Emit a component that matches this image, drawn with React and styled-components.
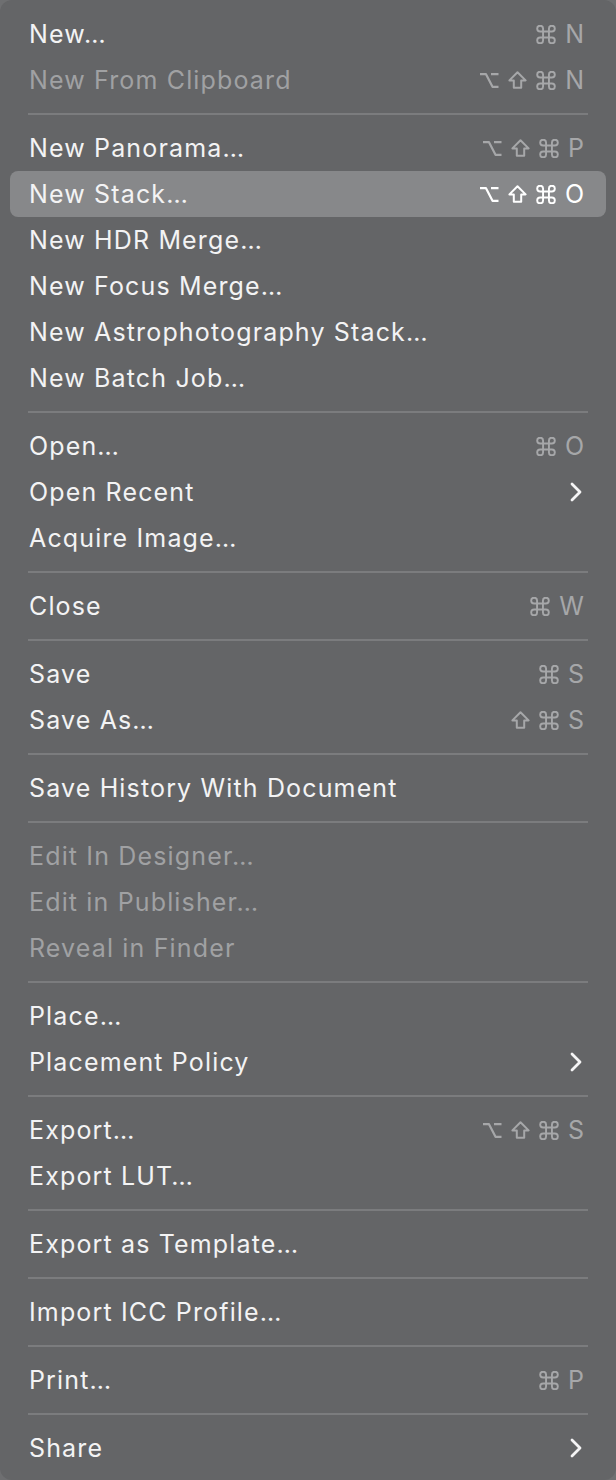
import React from "react";
import styled, { createGlobalStyle } from "styled-components";

const Global = createGlobalStyle`
  html, body { margin: 0; padding: 0; background: #6e6f71; }
  body { font-family: Inter, "Open Sans", "Liberation Sans", sans-serif; -webkit-font-smoothing: antialiased; }
`;

const Menu = styled.div`
  width: 616px;
  height: 1480px;
  box-sizing: border-box;
  background: #646567;
  border-radius: 12px;
  padding: 11px 10px 9px;
  display: flex;
  flex-direction: column;
`;

const Row = styled.div`
  height: 46px;
  display: flex;
  align-items: center;
  justify-content: space-between;
  padding: 0 22px 0 19px;
  border-radius: 8px;
  background: ${(p) => (p.$active ? "#87888a" : "transparent")};
  color: ${(p) => (p.$disabled ? "#a0a1a3" : "#f3f3f4")};
  font-size: 25px;
  letter-spacing: 1.15px;
`;

const Label = styled.span`
  white-space: nowrap;
`;

const Shortcut = styled.span`
  display: flex;
  align-items: center;
  gap: 9px;
  color: ${(p) => (p.$active ? "#ffffff" : "#a6a7a9")};
  letter-spacing: 0;
  svg { display: block; }
`;

const Key = styled.span`
  font-size: 25px;
  line-height: 1;
`;

const SepWrap = styled.div`
  height: 22px;
  display: flex;
  align-items: center;
  padding: 0 18px;
`;

const SepLine = styled.div`
  flex: 1;
  height: 2px;
  background: #7b7c7e;
`;

const OptionIcon = () => (
  <svg width="20" height="17" viewBox="0 0 20 17">
    <path d="M1 2.2 H7 L13.5 14.8 H19.5 M12 2.2 H19.5" fill="none" stroke="currentColor" strokeWidth="2.2" strokeLinejoin="round" />
  </svg>
);

const ShiftIcon = () => (
  <svg width="19" height="18" viewBox="0 0 19 18">
    <path d="M9.5 1.3 L17.6 9.4 H13.2 V16.8 H5.8 V9.4 H1.4 Z" fill="none" stroke="currentColor" strokeWidth="2" strokeLinejoin="round" />
  </svg>
);

const CommandIcon = () => (
  <svg width="20" height="19" viewBox="2.3 2.3 19.4 19.4">
    <path
      d="M15 6v12a3 3 0 1 0 3-3H6a3 3 0 1 0 3 3V6a3 3 0 1 0-3 3h12a3 3 0 1 0-3-3"
      fill="none"
      stroke="currentColor"
      strokeWidth="1.95"
      strokeLinecap="round"
      strokeLinejoin="round"
    />
  </svg>
);

const Chevron = () => (
  <svg width="14" height="22" viewBox="0 0 14 22" style={{ marginRight: 1 }}>
    <path d="M3 3 L11 11 L3 19" fill="none" stroke="#f4f4f5" strokeWidth="2.8" strokeLinecap="round" strokeLinejoin="round" />
  </svg>
);

const symbols = {
  opt: <OptionIcon />,
  shift: <ShiftIcon />,
  cmd: <CommandIcon />,
};

const groups = [
  [
    { label: "New…", keys: ["cmd", "N"] },
    { label: "New From Clipboard", keys: ["opt", "shift", "cmd", "N"], disabled: true },
  ],
  [
    { label: "New Panorama…", keys: ["opt", "shift", "cmd", "P"] },
    { label: "New Stack…", keys: ["opt", "shift", "cmd", "O"], active: true },
    { label: "New HDR Merge…" },
    { label: "New Focus Merge…" },
    { label: "New Astrophotography Stack…" },
    { label: "New Batch Job…" },
  ],
  [
    { label: "Open…", keys: ["cmd", "O"] },
    { label: "Open Recent", sub: true },
    { label: "Acquire Image…" },
  ],
  [{ label: "Close", keys: ["cmd", "W"] }],
  [
    { label: "Save", keys: ["cmd", "S"] },
    { label: "Save As…", keys: ["shift", "cmd", "S"] },
  ],
  [{ label: "Save History With Document" }],
  [
    { label: "Edit In Designer…", disabled: true },
    { label: "Edit in Publisher…", disabled: true },
    { label: "Reveal in Finder", disabled: true },
  ],
  [
    { label: "Place…" },
    { label: "Placement Policy", sub: true },
  ],
  [
    { label: "Export…", keys: ["opt", "shift", "cmd", "S"] },
    { label: "Export LUT…" },
  ],
  [{ label: "Export as Template…" }],
  [{ label: "Import ICC Profile…" }],
  [{ label: "Print…", keys: ["cmd", "P"] }],
  [{ label: "Share", sub: true }],
];

export default function App() {
  return (
    <>
      <Global />
      <Menu>
        {groups.map((g, gi) => (
          <React.Fragment key={gi}>
            {gi > 0 && (
              <SepWrap>
                <SepLine />
              </SepWrap>
            )}
            {g.map((it) => (
              <Row key={it.label} $active={it.active} $disabled={it.disabled}>
                <Label>{it.label}</Label>
                {it.keys && (
                  <Shortcut $active={it.active}>
                    {it.keys.map((k, i) =>
                      symbols[k] ? (
                        <React.Fragment key={i}>{symbols[k]}</React.Fragment>
                      ) : (
                        <Key key={i}>{k}</Key>
                      )
                    )}
                  </Shortcut>
                )}
                {it.sub && <Chevron />}
              </Row>
            ))}
          </React.Fragment>
        ))}
      </Menu>
    </>
  );
}
